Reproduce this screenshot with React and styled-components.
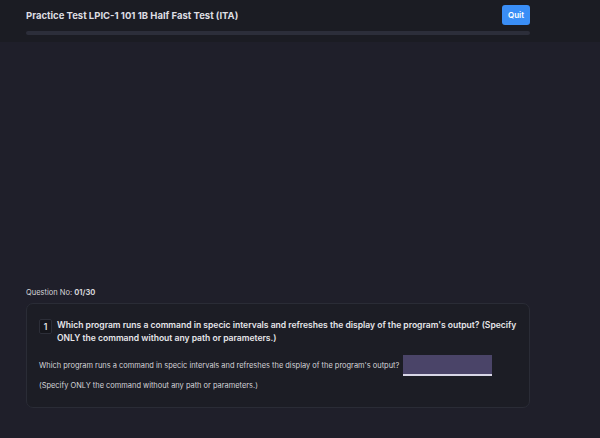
import React from 'react';
import styled, { createGlobalStyle } from 'styled-components';

const GlobalStyle = createGlobalStyle`
  html, body, #root {
    margin: 0;
    height: 100%;
  }
  body {
    background: #1f1f2a;
    font-family: Inter, "Noto Sans", sans-serif;
    color: #e4e4e7;
  }
`;

const Page = styled.div`
  height: 100%;
  display: flex;
  flex-direction: column;
`;

const Header = styled.header`
  background: #1b1c23;
  padding: 4px 70px 0 26px;
  height: 38px;
`;

const HeaderRow = styled.div`
  display: flex;
  align-items: center;
  justify-content: space-between;
  height: 22px;
`;

const Title = styled.h1`
  margin: 0;
  font-size: 9.5px;
  font-weight: 700;
  color: #dedee2;
`;

const QuitButton = styled.button`
  border: none;
  border-radius: 3px;
  background: #3a8ef6;
  color: #fff;
  font-family: inherit;
  font-size: 8px;
  font-weight: 600;
  width: 28px;
  height: 20px;
  padding: 0;
`;

const Progress = styled.div`
  margin-top: 5px;
  height: 4px;
  border-radius: 2px;
  background: #2c2e3a;
`;

const Main = styled.main`
  flex: 1;
  display: flex;
  flex-direction: column;
  justify-content: flex-end;
  padding: 0 70px 30px 26px;
`;

const Counter = styled.div`
  font-size: 7.5px;
  color: #d4d4d8;
  margin-bottom: 6px;

  b {
    font-weight: 700;
  }
`;

const Card = styled.section`
  background: #1c1d25;
  border: 1px solid #2a2c36;
  border-radius: 7px;
  padding: 15px 12px 17px 12px;
`;

const QuestionHead = styled.div`
  display: flex;
  gap: 5px;
  align-items: flex-start;
  margin-bottom: 10px;
`;

const Badge = styled.span`
  flex: none;
  display: inline-flex;
  align-items: center;
  justify-content: center;
  width: 11px;
  height: 13px;
  border-radius: 2px;
  background: #15161c;
  border: 1px solid #2c2e38;
  font-size: 8.5px;
  font-weight: 600;
  color: #e4e4e7;
`;

const QuestionText = styled.p`
  margin: 0;
  font-size: 8.55px;
  font-weight: 600;
  line-height: 13px;
  color: #e6e6ea;
`;

const Body = styled.p`
  margin: 0;
  font-size: 7.45px;
  color: #d4d4d8;
  display: flex;
  align-items: center;
  gap: 4px;
`;

const AnswerInput = styled.input`
  width: 89px;
  height: 21px;
  box-sizing: border-box;
  border: none;
  border-bottom: 2px solid #d8d6e6;
  background: #4a4468;
  outline: none;
  color: #fff;
  padding: 0 4px;
`;

const Note = styled.p`
  margin: 5px 0 0;
  font-size: 7.45px;
  color: #d4d4d8;
`;

export default function App() {
  return (
    <Page>
      <GlobalStyle />
      <Header>
        <HeaderRow>
          <Title>Practice Test LPIC-1 101 1B Half Fast Test (ITA)</Title>
          <QuitButton>Quit</QuitButton>
        </HeaderRow>
        <Progress />
      </Header>
      <Main>
        <Counter>
          Question No: <b>01/30</b>
        </Counter>
        <Card>
          <QuestionHead>
            <Badge>1</Badge>
            <QuestionText>
              Which program runs a command in specic intervals and refreshes the display of the
              program's output? (Specify ONLY the command without any path or parameters.)
            </QuestionText>
          </QuestionHead>
          <Body>
            Which program runs a command in specic intervals and refreshes the display of the program's output?
            <AnswerInput />
          </Body>
          <Note>(Specify ONLY the command without any path or parameters.)</Note>
        </Card>
      </Main>
    </Page>
  );
}
